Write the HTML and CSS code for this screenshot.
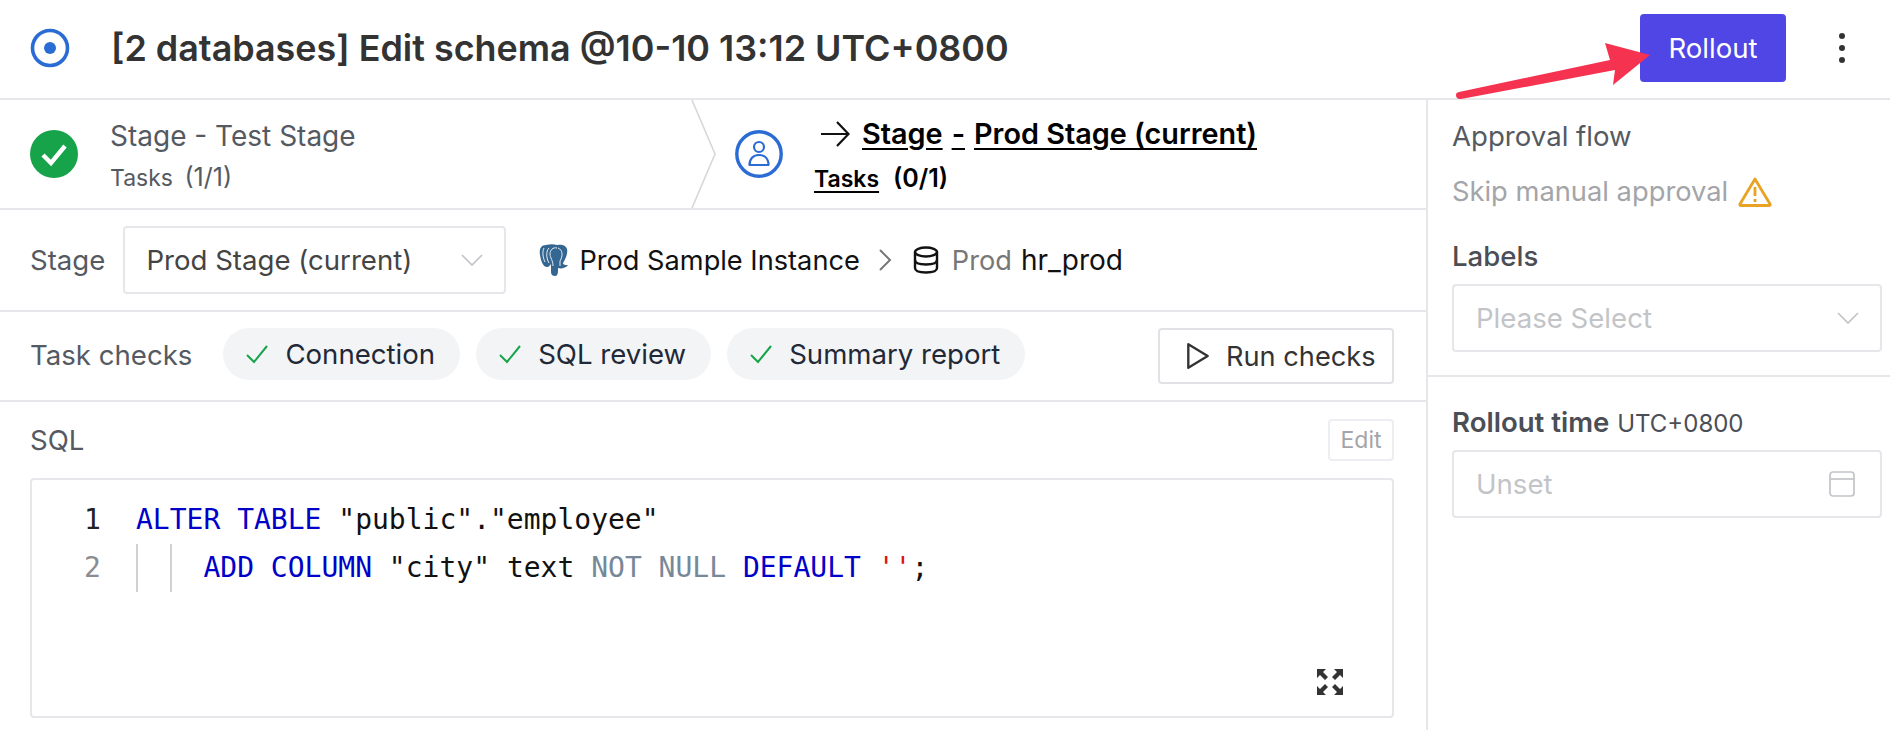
FILE: index.html
```html
<!DOCTYPE html>
<html lang="en">
<head>
<meta charset="utf-8">
<title>Issue</title>
<link rel="stylesheet" href="styles.css">
</head>
<body>
<div class="page">
  <header class="header">
    <svg class="status-icon" viewBox="0 0 40 40"><circle cx="20" cy="20" r="17.5" fill="none" stroke="#2b6cd4" stroke-width="3.6"/><circle cx="20" cy="20" r="6" fill="#2b6cd4"/></svg>
    <h1 class="title">[2 databases] Edit schema @10-10 13:12 UTC+0800</h1>
    <button class="rollout">Rollout</button>
    <svg class="kebab" viewBox="0 0 8 32"><circle cx="4" cy="4" r="3" fill="#333"/><circle cx="4" cy="16" r="3" fill="#333"/><circle cx="4" cy="28" r="3" fill="#333"/></svg>
  </header>
  <svg class="annot-arrow" viewBox="0 0 210 70"><path d="M3 55 C3 53 4 52.500 6 52 L157 20 L152 3 L197 15 L160 45 L162 30 L8 59 C5 59.500 3 58 3 55 Z" fill="#f5324f"/></svg>
  <div class="main">
    <div class="left">
      <div class="stages">
        <div class="stage stage-done">
          <svg class="stage-icon" viewBox="0 0 48 48"><circle cx="24" cy="24" r="24" fill="#16a34a"/><path d="M13 25 L21 33 L35 16" fill="none" stroke="#fff" stroke-width="4.4"/></svg>
          <div class="stage-text">
            <div class="stage-name">Stage - Test Stage</div>
            <div class="stage-tasks">Tasks <span class="count">(1/1)</span></div>
          </div>
        </div>
        <svg class="stage-sep" viewBox="0 0 26 108"><path d="M1 0 L24 54 L1 108" fill="none" stroke="#d5d7db" stroke-width="1.6"/></svg>
        <div class="stage stage-current">
          <svg class="stage-icon" viewBox="0 0 48 48"><circle cx="24" cy="24" r="22.2" fill="none" stroke="#2b6cd4" stroke-width="3.4"/><circle cx="24" cy="17" r="5" fill="none" stroke="#2b6cd4" stroke-width="2.2"/><path d="M14.5 35 C14.5 29 18 25 24 25 C30 25 33.5 29 33.5 35 Z" fill="none" stroke="#2b6cd4" stroke-width="2.2" stroke-linejoin="round"/></svg>
          <div class="stage-text">
            <div class="stage-name cur-name">
              <svg class="cur-arrow" viewBox="0 0 30 30"><path d="M1 15 H28 M17 3 L28.500 15 L17 27" fill="none" stroke="#111" stroke-width="2.200"/></svg>
              <span class="u">Stage</span><span class="u">-</span><span class="u">Prod Stage (current)</span>
            </div>
            <div class="stage-tasks cur-tasks"><span class="u">Tasks</span> <span class="count">(0/1)</span></div>
          </div>
        </div>
      </div>
      <div class="row stage-row">
        <span class="label">Stage</span>
        <div class="select stage-select"><span>Prod Stage (current)</span>
          <svg class="chev" viewBox="0 0 22 12"><path d="M1 1 L11 11 L21 1" fill="none" stroke="#c2c4c8" stroke-width="1.700"/></svg></div>
        <svg class="pg" viewBox="0 0 30 32"><path d="M7 1 C2 1 0 5 1 11 C2 17 4 23 8 23 C10 23 11 21 12 20 L12 28 C12 31 14 32 16 32 C18 32 19 30 19 27 L19 24 C22 25 27 24 29 21 C27 21 24 21 24 19 C27 14 29 9 28 5 C27 1 22 0 18 1 C15 0 11 0 7 1 Z" fill="#336791"/><path d="M10 4 C7 7 7 14 10 19 M18 4 C14 3 11 6 11 10 C11 14 14 16 14 22 M19 4 C24 6 24 12 21 17 L21 22 M5 4 C3 8 4 14 6 18" fill="none" stroke="#e8eef4" stroke-width="1"/></svg>
        <span class="crumb">Prod Sample Instance</span>
        <svg class="crumb-chev" viewBox="0 0 14 24"><path d="M2 2 L12 12 L2 22" fill="none" stroke="#777" stroke-width="2"/></svg>
        <svg class="db" viewBox="0 0 26 28"><g fill="none" stroke="#111" stroke-width="2.400"><ellipse cx="13" cy="6" rx="11" ry="4.500"/><path d="M2 6 V22 C2 25 7 26.500 13 26.500 C19 26.500 24 25 24 22 V6"/><path d="M2 14 C2 17 7 18.500 13 18.500 C19 18.500 24 17 24 14"/></g></svg>
        <span class="crumb-env">Prod</span>
        <span class="crumb">hr_prod</span>
      </div>
      <div class="row checks-row">
        <span class="label">Task checks</span>
        <span class="chip"><svg class="chip-check" viewBox="0 0 24 20"><path d="M2 11 L9 18 L22 2" fill="none" stroke="#16a34a" stroke-width="2"/></svg>Connection</span>
        <span class="chip"><svg class="chip-check" viewBox="0 0 24 20"><path d="M2 11 L9 18 L22 2" fill="none" stroke="#16a34a" stroke-width="2"/></svg>SQL review</span>
        <span class="chip"><svg class="chip-check" viewBox="0 0 24 20"><path d="M2 11 L9 18 L22 2" fill="none" stroke="#16a34a" stroke-width="2"/></svg>Summary report</span>
        <button class="run"><svg class="play" viewBox="0 0 22 26"><path d="M2 2 L20 13 L2 24 Z" fill="none" stroke="#333" stroke-width="2.200" stroke-linejoin="round"/></svg>Run checks</button>
      </div>
      <div class="sql">
        <div class="sql-head"><span class="label">SQL</span><button class="edit">Edit</button></div>
        <div class="editor">
          <div class="line"><span class="ln">1</span><code><span class="kw">ALTER TABLE</span> "public"."employee"</code></div>
          <div class="line"><span class="ln ln-dim">2</span><code class="guides">    <span class="kw">ADD COLUMN</span> "city" text <span class="op">NOT NULL</span> <span class="kw">DEFAULT</span> <span class="str">''</span>;</code></div>
          <svg class="expand" viewBox="0 0 28 28"><g fill="#333"><path d="M1 1 H10 L7 4 L12 9 L9 12 L4 7 L1 10 Z"/><path d="M27 1 H18 L21 4 L16 9 L19 12 L24 7 L27 10 Z"/><path d="M1 27 H10 L7 24 L12 19 L9 16 L4 21 L1 18 Z"/><path d="M27 27 H18 L21 24 L16 19 L19 16 L24 21 L27 18 Z"/></g></svg>
        </div>
      </div>
    </div>
    <aside class="side">
      <section class="side-top">
        <div class="side-label">Approval flow</div>
        <div class="skip">Skip manual approval
          <svg class="warn" viewBox="0 0 34 30"><path d="M17 2 L32 27 C32.500 28 32 28.500 31 28.500 H3 C2 28.500 1.500 28 2 27 Z" fill="none" stroke="#e8a323" stroke-width="2.800" stroke-linejoin="round"/><path d="M17 10 V19 M17 22 V25" stroke="#e8a323" stroke-width="2.800"/></svg>
        </div>
        <div class="side-label labels">Labels</div>
        <div class="select side-select"><span class="ph">Please Select</span>
          <svg class="chev" viewBox="0 0 22 12"><path d="M1 1 L11 11 L21 1" fill="none" stroke="#c2c4c8" stroke-width="1.700"/></svg></div>
      </section>
      <section class="side-bottom">
        <div class="side-label"><strong>Rollout time</strong> <span class="tz">UTC+0800</span></div>
        <div class="select side-select"><span class="ph">Unset</span>
          <svg class="cal" viewBox="0 0 26 26"><rect x="1" y="1" width="24" height="24" rx="3" fill="none" stroke="#c2c4c8" stroke-width="1.700"/><path d="M1 8 H25" stroke="#c2c4c8" stroke-width="1.700"/></svg></div>
      </section>
    </aside>
  </div>
</div>
</body>
</html>
```
FILE: styles.css
```css
* { box-sizing: border-box; }
html, body { margin: 0; padding: 0; }
body {
  font-family: Inter, "Liberation Sans", sans-serif;
  font-size: 27.6px;
  color: #333;
  background: #fff;
}
.page { position: relative; width: 1890px; height: 730px; overflow: hidden; display: flex; flex-direction: column; }
button { font-family: inherit; cursor: pointer; }

.header { height: 100px; flex: none; display: flex; align-items: center; padding: 0 0 2px 30px; border-bottom: 2px solid #e5e7eb; }
.status-icon { width: 40px; height: 40px; flex: none; }
.title { margin: 0 0 0 41px; font-size: 35.9px; font-weight: 600; color: #333; flex: 1; white-space: nowrap; }
.rollout { width: 146px; height: 68px; border: 0; border-radius: 4px; background: #4f46e5; color: #fff; font-size: 27.6px; padding: 0; }
.kebab { width: 8px; height: 32px; margin: 0 44px 0 52px; flex: none; }
.annot-arrow { position: absolute; left: 1453px; top: 40px; width: 210px; height: 70px; }

.main { flex: 1; display: flex; min-height: 0; }
.left { width: 1428px; flex: none; border-right: 2px solid #e5e7eb; display: flex; flex-direction: column; }

.stages { height: 110px; flex: none; display: flex; align-items: center; border-bottom: 2px solid #e5e7eb; }
.stage { display: flex; align-items: center; }
.stage-done { width: 691px; padding-left: 30px; }
.stage-sep { width: 26px; height: 108px; flex: none; }
.stage-current { padding-left: 18px; }
.stage-icon { width: 48px; height: 48px; flex: none; }
.stage-text { padding-top: 6px; }
.stage-done .stage-text { margin-left: 32px; }
.stage-current .stage-text { margin-left: 31px; padding-top: 4px; }
.stage-name { font-size: 28px; color: #555a62; line-height: 40px; }
.stage-tasks { font-size: 23px; word-spacing: 5px; color: #555a62; line-height: 40px; margin-top: 1px; }
.count { font-size: 25px; }
.cur-name { color: #000; font-weight: 600; font-size: 28.8px; margin-left: 6px; display: flex; align-items: center; gap: 9px; white-space: pre; }
.cur-arrow { width: 30px; height: 30px; margin-right: 3px; }
.cur-tasks { color: #000; font-weight: 600; margin-top: 4px; word-spacing: 8px; }
.u { text-decoration: underline; text-underline-offset: 4px; text-decoration-thickness: 2px; }

.row { flex: none; display: flex; align-items: center; border-bottom: 2px solid #e5e7eb; padding-left: 30px; }
.label { color: #555a62; font-size: 27.6px; }
.stage-row { height: 102px; }
.select { display: flex; align-items: center; justify-content: space-between; height: 68px; border: 2px solid #e5e7eb; border-radius: 4px; background: #fff; }
.stage-select { width: 383px; margin-left: 18px; padding: 0 21px 0 21px; color: #444; }
.chev { width: 22px; height: 12px; flex: none; }
.pg { width: 30px; height: 32px; margin-left: 33px; flex: none; }
.crumb { color: #111; margin-left: 10px; font-size: 27.2px; }
.crumb-chev { width: 14px; height: 24px; margin-left: 18px; flex: none; }
.db { width: 26px; height: 28px; margin-left: 21px; flex: none; }
.crumb-env { color: #777; margin-left: 13px; font-size: 27.2px; }
.crumb-env + .crumb { margin-left: 9px; font-size: 28px; }

.checks-row { height: 90px; padding-right: 32px; gap: 16px; }
.checks-row .label { margin-right: 15px; margin-bottom: 3px; }
.chip { height: 52px; margin-bottom: 4px; display: flex; align-items: center; background: #f3f4f6; border-radius: 26px; padding: 0 25px 0 22px; color: #1f2937; }
.chip-check { width: 24px; height: 20px; margin-right: 16px; flex: none; }
.run { margin-left: auto; width: 236px; height: 56px; border: 2px solid #e0e2e6; border-radius: 4px; background: #fff; color: #333; font-size: 27.2px; padding: 0 0 0 26px; display: flex; align-items: center; }
.play { width: 24px; height: 28px; margin-right: 16px; flex: none; }

.sql { flex: 1; padding: 17px 32px 0 30px; }
.sql-head { display: flex; align-items: center; justify-content: space-between; height: 42px; }
.edit { width: 66px; height: 42px; border: 2px solid #eceef1; border-radius: 4px; background: #fff; color: #a3a5a9; font-size: 23px; padding: 0; }
.editor { position: relative; margin-top: 17px; height: 240px; border: 2px solid #e5e7eb; border-radius: 4px; padding-top: 16px; font-family: "DejaVu Sans Mono", "Liberation Mono", monospace; font-size: 28px; color: #111; }
.line { display: flex; height: 48px; line-height: 48px; white-space: pre; }
.ln { width: 52px; margin-left: 52px; flex: none; color: #222; }
.ln-dim { color: #8a8d91; }
code { font-family: inherit; }
.guides { background-image: linear-gradient(#cfd1d4, #cfd1d4), linear-gradient(#cfd1d4, #cfd1d4); background-size: 2px 100%, 2px 100%; background-position: 0 0, 34px 0; background-repeat: no-repeat; }
.kw { color: #0000c8; }
.op { color: #778899; }
.str { color: #e01010; }
.expand { position: absolute; right: 48px; bottom: 20px; width: 28px; height: 28px; }

.side { flex: 1; min-width: 0; display: flex; flex-direction: column; }
.side-top { height: 277px; padding: 16px 8px 0 24px; border-bottom: 2px solid #e5e7eb; }
.side-label { color: #555a62; line-height: 40px; font-size: 27.6px; }
.skip { display: flex; align-items: center; color: #a3a5a9; margin-top: 16px; line-height: 40px; font-size: 27.3px; }
.warn { width: 34px; height: 30px; margin-left: 10px; flex: none; }
.labels { margin-top: 24px; font-weight: 500; color: #4b4e55; line-height: 40px; }
.labels + .side-select { margin-top: 8px; }
.side-select { margin-top: 6px; padding: 0 21px 0 22px; }
.side-bottom { padding: 25px 8px 0 24px; }
.side-bottom strong { font-weight: 600; color: #4b4e55; }
.tz { font-size: 24px; color: #4b4e55; }
.ph { color: #c2c4c8; }
.cal { width: 26px; height: 26px; flex: none; margin-right: 4px; }
```
